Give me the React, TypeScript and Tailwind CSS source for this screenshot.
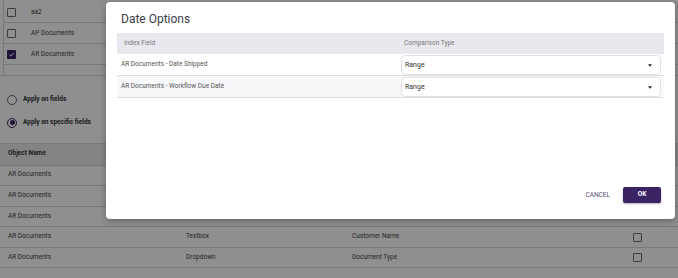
const listItems = [
  { name: 'aa2', checked: false },
  { name: 'AP Documents', checked: false },
  { name: 'AR Documents', checked: true },
];

const tableRows = [
  { object: 'AR Documents', type: '', field: '', check: false },
  { object: 'AR Documents', type: '', field: '', check: false },
  { object: 'AR Documents', type: '', field: '', check: false },
  { object: 'AR Documents', type: 'Textbox', field: 'Customer Name', check: true },
  { object: 'AR Documents', type: 'Dropdown', field: 'Document Type', check: true },
];

const dateFields = ['AR Documents - Date Shipped', 'AR Documents - Workflow Due Date'];

function Box({ checked }: { checked?: boolean }) {
  return (
    <span
      className={
        checked
          ? 'flex h-[9px] w-[9px] shrink-0 items-center justify-center rounded-[1px] bg-[#3a2464]'
          : 'block h-[9px] w-[9px] shrink-0 rounded-[1px] border border-[#6e6e6e]'
      }
    >
      {checked && (
        <svg viewBox="0 0 10 10" className="h-[7px] w-[7px]">
          <path d="M2 5.2 4.2 7.3 8.2 2.8" fill="none" stroke="white" strokeWidth="1.4" />
        </svg>
      )}
    </span>
  );
}

function Radio({ on, label }: { on?: boolean; label: string }) {
  return (
    <div className="flex h-[23px] items-center gap-[6px] pl-[7px]">
      <span
        className={
          on
            ? 'flex h-[10px] w-[10px] items-center justify-center rounded-full border border-[#3a2464]'
            : 'h-[10px] w-[10px] rounded-full border border-[#6e6e6e]'
        }
      >
        {on && <span className="h-[5px] w-[5px] rounded-full bg-[#3a2464]" />}
      </span>
      <span className="text-[6.5px] font-bold text-[#333]">{label}</span>
    </div>
  );
}

function Background() {
  return (
    <div className="flex h-full flex-col bg-white text-[6.5px] text-[#444]">
      <div className="ml-[3px] flex h-[75px] flex-col border-l border-[#d6d6d6] pt-[2px]">
        {listItems.map((it) => (
          <div key={it.name} className="flex h-[21px] shrink-0 items-center border-b border-[#d6d6d6] pt-[1px]">
            <span className="flex w-[27px] pl-[3px]">
              <Box checked={it.checked} />
            </span>
            <span>{it.name}</span>
          </div>
        ))}
      </div>
      <div className="border-t border-[#d6d6d6] pt-[12px]">
        <Radio label="Apply on fields" />
        <Radio on label="Apply on specific fields" />
      </div>
      <div className="mt-[9px] border-y border-[#d6d6d6]">
        <div className="flex h-[20.5px] items-center bg-[#ececec] pl-[8px] font-bold text-[#333]">Object Name</div>
        {tableRows.map((r, i) => (
          <div key={i} className="flex h-[20.6px] items-center border-t border-[#d6d6d6] pl-[8px]">
            <span className="w-[178px]">{r.object}</span>
            <span className="w-[166px]">{r.type}</span>
            <span className="w-[281px]">{r.field}</span>
            {r.check && <Box />}
          </div>
        ))}
      </div>
    </div>
  );
}

function Select() {
  return (
    <div className="flex h-[20px] w-[260px] items-center justify-between rounded-[4px] border border-[#e2e2e2] bg-white pl-[3px] pr-[8px] text-[7px] text-[#333]">
      <span>Range</span>
      <svg viewBox="0 0 6 4" className="h-[3px] w-[4px]">
        <path d="M0 0h6L3 4z" fill="#222" />
      </svg>
    </div>
  );
}

function DateOptionsModal() {
  return (
    <div className="absolute left-[106px] top-[2px] flex h-[217px] w-[569px] flex-col rounded-[4px] bg-white shadow-[0_2px_6px_rgba(0,0,0,0.3)]">
      <h2 className="pl-[15px] pt-[9px] text-[12px] leading-[16px] text-[#3c3c4a]">Date Options</h2>
      <div className="mx-[11px] mt-[6px] text-[6.5px] text-[#555]">
        <div className="flex h-[21px] items-center bg-[#e9e8ee] text-[#777]">
          <span className="w-[281px] pl-[7px]">Index Field</span>
          <span className="pl-[6px]">Comparison Type</span>
        </div>
        {dateFields.map((f, i) => (
          <div
            key={f}
            className={`flex h-[22px] items-center border-b border-[#dedede] pt-[1px] ${i === 1 ? 'bg-[#f8f8fa]' : 'bg-white'}`}
          >
            <span className="w-[284px] pl-[4px]">{f}</span>
            <Select />
          </div>
        ))}
      </div>
      <div className="mt-auto flex items-center justify-end gap-[13px] pb-[16px] pr-[14px]">
        <button className="pt-[2px] text-[6.5px] text-[#5a4f78]">CANCEL</button>
        <button className="h-[16px] w-[38px] rounded-[2px] bg-[#3a2464] text-[6.5px] font-bold text-white shadow-[0_1px_2px_rgba(0,0,0,0.3)]">
          OK
        </button>
      </div>
    </div>
  );
}

export default function App() {
  return (
    <div className="relative h-[278px] w-[678px] overflow-hidden font-['Roboto',sans-serif]">
      <Background />
      <div className="absolute inset-0 bg-black/[0.44]" />
      <DateOptionsModal />
    </div>
  );
}
